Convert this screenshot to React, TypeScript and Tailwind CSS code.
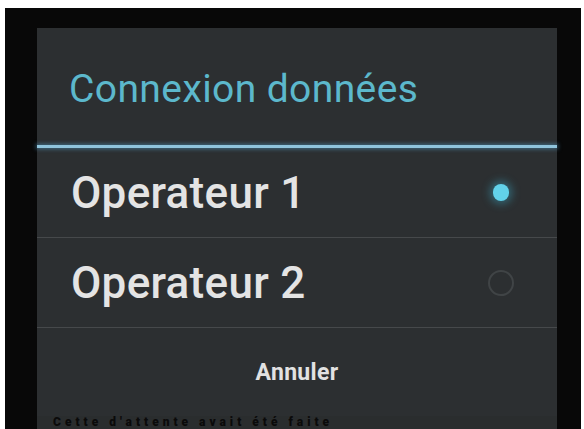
import React from "react";

const font = { fontFamily: "Roboto, 'Noto Sans', sans-serif" };

type Option = { id: string; label: string; selected: boolean };

const OPTIONS: Option[] = [
  { id: "op1", label: "Operateur 1", selected: true },
  { id: "op2", label: "Operateur 2", selected: false },
];

function Radio({ checked }: { checked: boolean }) {
  if (checked) {
    return (
      <div className="flex h-[26px] w-[26px] items-center justify-center rounded-full">
        <div className="h-[17px] w-[16px] rounded-full bg-[#62d2ea] shadow-[0_0_9px_3px_rgba(60,170,200,0.45)]" />
      </div>
    );
  }
  return <div className="h-[26px] w-[26px] rounded-full border-2 border-[#404446]" />;
}

export default function App() {
  return (
    <div
      className="flex h-[429px] w-[584px] overflow-hidden bg-white pl-[5px] pr-[3px] pt-[8px]"
      style={font}
    >
      <div className="flex flex-1 flex-col bg-[#080808] pl-[32px] pr-[20px] pt-[20px]">
        {/* dialog */}
        <div className="flex w-[520px] flex-col bg-[#2c2f31]">
          <div className="flex h-[117px] items-center pl-[32px] pt-[6px]">
            <span className="text-[39px] leading-none tracking-[0.4px] text-[#5cb8cc]">
              Connexion données
            </span>
          </div>
          <div className="h-[3px] bg-[#8fc4dc] shadow-[0_0_4px_1px_rgba(80,150,190,0.6)]" />

          {OPTIONS.map((opt) => (
            <div
              key={opt.id}
              className="flex h-[90px] items-center justify-between border-b border-[#46494b] pl-[34px] pr-[43px] last:h-[89px]"
            >
              <span className="text-[44px] font-medium leading-none tracking-[0.3px] text-[#e4e4e4]">
                {opt.label}
              </span>
              <Radio checked={opt.selected} />
            </div>
          ))}

          <div className="flex h-[88px] items-center justify-center">
            <span className="text-[23px] font-bold leading-none tracking-[0.3px] text-[#e2e2e2]">
              Annuler
            </span>
          </div>
        </div>

        {/* activity text behind the dialog */}
        <div className="flex h-[13px] w-[520px] items-start overflow-hidden bg-[#2a2d2e] pl-[16px] pt-[1px]">
          <span className="whitespace-nowrap text-[12px] font-black leading-[11px] tracking-[4px] text-[#0a0a0a]">
            Cette d&apos;attente avait été faite
          </span>
        </div>
      </div>
    </div>
  );
}
